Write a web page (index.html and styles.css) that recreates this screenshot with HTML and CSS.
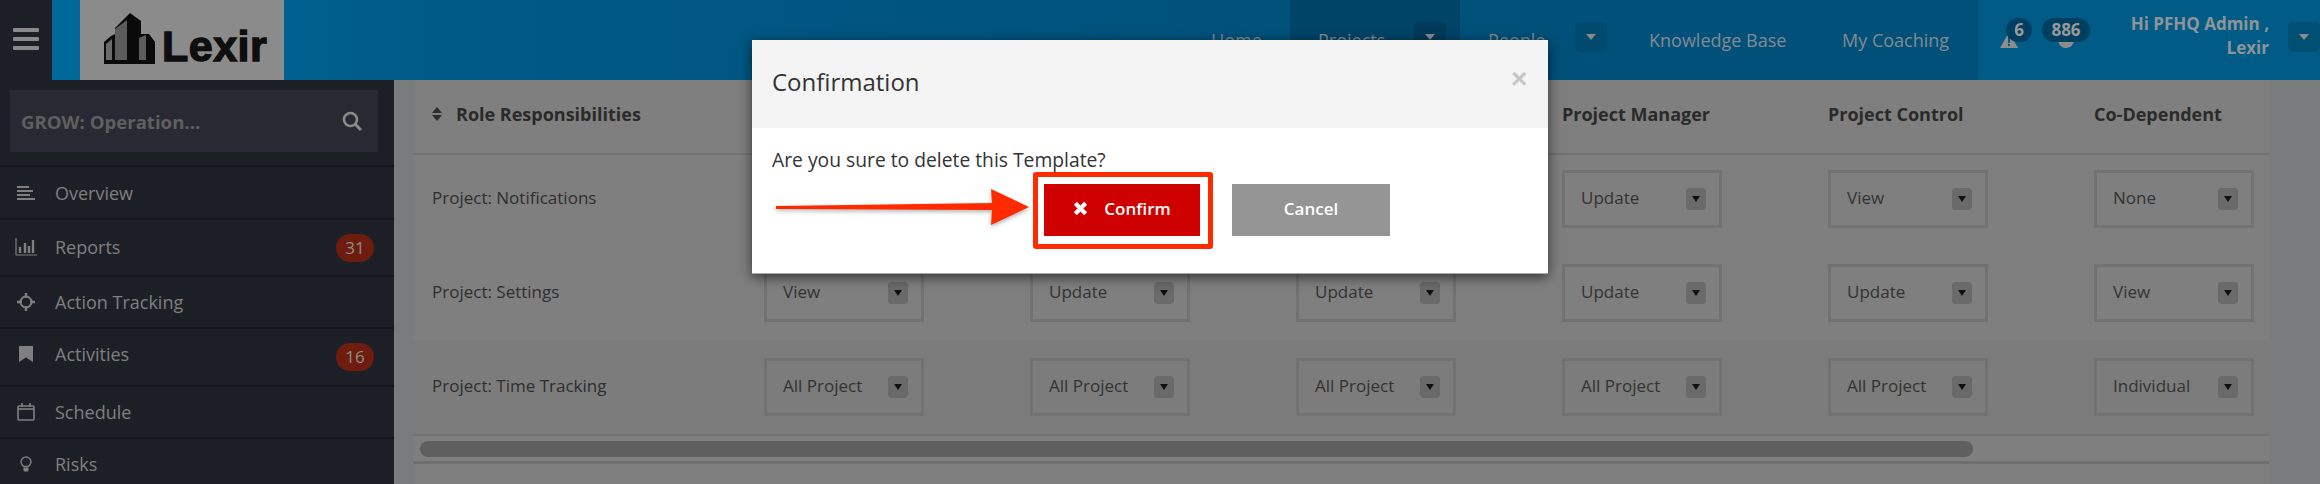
FILE: index.html
```html
<!DOCTYPE html>
<html lang="en">
<head>
<meta charset="utf-8">
<title>Confirmation</title>
<link rel="stylesheet" href="styles.css">
</head>
<body>
<div class="page">
  <header class="topbar">
    <div class="burger"><span></span><span></span><span></span></div>
    <div class="brandbar">
      <div class="logo">
        <svg class="logo-mark" viewBox="0 0 54 52" width="54" height="52">
          <path d="M8 24 L12 22 V16 L27 1 L38 9 V22 L46 22 L52 30 V52 H1 V30 Z" fill="#0a0a0a"/>
          <path d="M12 17 L24 8 V48 H12 Z" fill="#5c5c5c"/>
          <path d="M3 32 L9 27 V48 H3 Z" fill="#6a6a6a"/>
          <path d="M36 26 L43 23 V48 H36 Z" fill="#5c5c5c"/>
        </svg>
        <span class="logo-text">Lexir</span>
      </div>
      <nav class="nav">
        <span class="nav-item nav-home">Home</span>
        <span class="nav-item nav-active">Projects<b class="caret-btn caret-active"><i class="caret"></i></b></span>
        <span class="nav-item nav-people">People<b class="caret-btn"><i class="caret"></i></b></span>
        <span class="nav-item nav-kb">Knowledge Base</span>
        <span class="nav-item nav-coach">My Coaching</span>
      </nav>
    </div>
    <div class="userbar">
      <div class="alerts">
        <svg class="alert-icon" viewBox="0 0 18 16" width="18" height="16"><path d="M9 0 L18 16 H0 Z" fill="#8d8d8d"/><rect x="8" y="5" width="2" height="6" fill="#005a85"/><rect x="8" y="12" width="2" height="2" fill="#005a85"/></svg>
        <span class="pill pill-six">6</span>
        <svg class="globe-icon" viewBox="0 0 16 16" width="16" height="16"><circle cx="8" cy="8" r="8" fill="#8d8d8d"/></svg>
        <span class="pill pill-many">886</span>
      </div>
      <div class="hello">Hi PFHQ Admin ,<br>Lexir</div>
      <b class="caret-btn caret-user"><i class="caret"></i></b>
    </div>
  </header>

  <div class="below">
    <aside class="sidebar">
      <div class="search-wrap">
        <div class="search">
          <span>GROW: Operation...</span>
          <svg viewBox="0 0 20 20" width="20" height="20"><circle cx="8.5" cy="8.5" r="6.5" fill="none" stroke="#8a8a8a" stroke-width="2.6"/><path d="M13.5 13.5 L19 19" stroke="#8a8a8a" stroke-width="3"/></svg>
        </div>
      </div>
      <ul class="menu">
        <li class="row-overview">
          <svg viewBox="0 0 20 16" width="20" height="16"><path d="M1 2H13M1 6H17M1 10H14M1 14H19" stroke="#7f7f7f" stroke-width="2.2"/></svg>
          <span>Overview</span>
        </li>
        <li class="row-reports">
          <svg viewBox="0 0 22 18" width="22" height="18"><path d="M1 0V17H22" fill="none" stroke="#7f7f7f" stroke-width="1.2"/><path d="M5 9V15M10 5V15M14 8V15M18 2V15" stroke="#7f7f7f" stroke-width="2.4"/></svg>
          <span>Reports</span><em class="count">31</em>
        </li>
        <li class="row-action">
          <svg viewBox="0 0 18 18" width="18" height="18"><circle cx="9" cy="9" r="5.5" fill="none" stroke="#7f7f7f" stroke-width="2"/><path d="M9 0V5M9 13V18M0 9H5M13 9H18" stroke="#7f7f7f" stroke-width="2.4"/></svg>
          <span>Action Tracking</span>
        </li>
        <li class="row-activities">
          <svg viewBox="0 0 14 16" width="14" height="16"><path d="M0 0H14V16L7 11.5L0 16Z" fill="#7f7f7f"/></svg>
          <span>Activities</span><em class="count">16</em>
        </li>
        <li class="row-schedule">
          <svg viewBox="0 0 18 18" width="18" height="18"><rect x="1" y="3" width="16" height="14" rx="1" fill="none" stroke="#7f7f7f" stroke-width="1.6"/><path d="M1 6H17" stroke="#7f7f7f" stroke-width="1.6"/><path d="M5 0V4M13 0V4" stroke="#7f7f7f" stroke-width="1.6"/></svg>
          <span>Schedule</span>
        </li>
        <li class="row-risks">
          <svg viewBox="0 0 12 16" width="12" height="16"><path d="M3.5 10.5C2 9 1 8 1 6A5 5 0 0 1 11 6C11 8 10 9 8.500 10.500Z" fill="none" stroke="#7f7f7f" stroke-width="1.4"/><rect x="3.500" y="11.500" width="5" height="4" rx="1" fill="#7f7f7f"/></svg>
          <span>Risks</span>
        </li>
      </ul>
    </aside>

    <main class="main">
      <div class="table">
        <div class="grid thead">
          <div class="th th-role">
            <svg viewBox="0 0 10 14" width="10" height="14"><path d="M5 0L10 6H0ZM5 14L0 8H10Z" fill="#2c2c2c"/></svg>
            Role Responsibilities
          </div>
          <div class="th"></div><div class="th"></div><div class="th"></div>
          <div class="th">Project Manager</div>
          <div class="th">Project Control</div>
          <div class="th">Co-Dependent</div>
        </div>
        <div class="grid trow trow-first">
          <div class="role">Project: Notifications</div>
          <div class="sel"><span></span><b><i></i></b></div>
          <div class="sel"><span></span><b><i></i></b></div>
          <div class="sel"><span></span><b><i></i></b></div>
          <div class="sel"><span>Update</span><b><i></i></b></div>
          <div class="sel"><span>View</span><b><i></i></b></div>
          <div class="sel"><span>None</span><b><i></i></b></div>
        </div>
        <div class="grid trow trow-mid">
          <div class="role">Project: Settings</div>
          <div class="sel"><span>View</span><b><i></i></b></div>
          <div class="sel"><span>Update</span><b><i></i></b></div>
          <div class="sel"><span>Update</span><b><i></i></b></div>
          <div class="sel"><span>Update</span><b><i></i></b></div>
          <div class="sel"><span>Update</span><b><i></i></b></div>
          <div class="sel"><span>View</span><b><i></i></b></div>
        </div>
        <div class="grid trow trow-last">
          <div class="role">Project: Time Tracking</div>
          <div class="sel"><span>All Project</span><b><i></i></b></div>
          <div class="sel"><span>All Project</span><b><i></i></b></div>
          <div class="sel"><span>All Project</span><b><i></i></b></div>
          <div class="sel"><span>All Project</span><b><i></i></b></div>
          <div class="sel"><span>All Project</span><b><i></i></b></div>
          <div class="sel"><span>Individual</span><b><i></i></b></div>
        </div>
        <div class="scroll"><div class="thumb"></div></div>
      </div>
    </main>
  </div>

  <section class="modal">
    <div class="modal-head">
      <h2>Confirmation</h2>
      <span class="close">×</span>
    </div>
    <div class="modal-body">
      <p>Are you sure to delete this Template?</p>
      <div class="actions">
        <button class="btn btn-confirm">
          <svg viewBox="0 0 16 16" width="15" height="15"><path d="M2.500 2.500L13.500 13.500M13.500 2.500L2.500 13.500" stroke="#fff" stroke-width="4.500"/></svg>
          Confirm
        </button>
        <button class="btn btn-cancel">Cancel</button>
      </div>
    </div>
  </section>

  <div class="mark-box"></div>
  <svg class="mark-arrow" viewBox="0 0 256 40" width="256" height="40">
    <path d="M0 17 L216 14 L215 0 L253 18 L215 36 L216 21 L0 20 Z" fill="#ff2a00"/>
  </svg>
</div>
</body>
</html>
```
FILE: styles.css
```css
* { box-sizing: border-box; }
html, body { margin: 0; padding: 0; }
body { background: #7a7b7d; font-family: "Open Sans", "Noto Sans", sans-serif; }
.page { position: relative; width: 2320px; height: 484px; overflow: hidden; }

/* top bar */
.topbar { display: flex; height: 80px; }
.burger { flex: none; width: 52px; background: #1d1f26; display: flex; flex-direction: column; gap: 5px; align-items: center; justify-content: center; padding-bottom: 3px; }
.burger span { width: 26px; height: 4px; background: #8a8a8a; border-radius: 1px; }
.brandbar { flex: 0 0 1926px; display: flex; background: linear-gradient(90deg, #00699b 0, #005a87 20%, #00517b 65%, #00507a 100%); padding-left: 28px; }
.logo { flex: none; width: 204px; background: #8b8b8b; display: flex; align-items: flex-end; padding: 0 0 16px 23px; }
.logo-mark { flex: none; }
.logo-text { font-family: "Liberation Sans", sans-serif; font-weight: 700; font-size: 43px; line-height: 36px; color: #0e0e0e; margin-left: 5px; -webkit-text-stroke: 1.4px #0e0e0e; letter-spacing: 0.5px; }
.nav { display: flex; color: #848a8e; font-size: 18px; }
.nav-item { display: flex; align-items: center; height: 80px; white-space: nowrap; }
.nav-home { margin-left: 927px; width: 79px; }
.nav-active { background: #004468; width: 170px; padding-left: 28px; position: relative; }
.nav-people { margin-left: 28px; width: 161px; position: relative; }
.nav-kb { width: 193px; }
.nav-coach { width: auto; }
.caret-btn { position: absolute; display: flex; align-items: center; justify-content: center; width: 32px; height: 30px; top: 22px; border-radius: 5px; background: #004a70; }
.nav-active .caret-btn { left: 124px; background: #003a5a; }
.nav-people .caret-btn { left: 87px; }
.caret { width: 0; height: 0; border-left: 5px solid transparent; border-right: 5px solid transparent; border-top: 6px solid #8a8a8a; }
.userbar { flex: 1; background: #005c87; position: relative; display: flex; }
.alerts { position: relative; width: 130px; }
.alert-icon { position: absolute; left: 22px; top: 32px; }
.globe-icon { position: absolute; left: 80px; top: 32px; }
.pill { position: absolute; top: 18px; height: 24px; border-radius: 12px; background: #003f60; color: #999; font-weight: 700; font-size: 17px; line-height: 24px; text-align: center; }
.pill-six { left: 28px; width: 26px; }
.pill-many { left: 64px; width: 48px; }
.hello { width: 161px; padding-top: 12px; text-align: right; color: #8f9498; font-weight: 700; font-size: 17px; line-height: 24px; white-space: nowrap; }
.caret-user { right: 0; background: #004f75; }

/* sidebar */
.below { display: flex; height: 404px; }
.sidebar { flex: none; width: 394px; background: #1d1f26; }
.search-wrap { height: 87px; padding: 10px 16px 0 10px; border-bottom: 2px solid #15171c; }
.search { height: 62px; background: #282932; display: flex; align-items: center; justify-content: space-between; padding: 0 16px 0 11px; color: #5f5f5f; font-weight: 700; font-size: 18.6px; }
.menu { list-style: none; margin: 0; padding: 0; color: #7f7f7f; font-size: 18px; }
.menu li { position: relative; display: flex; align-items: center; border-bottom: 2px solid #15171c; padding-left: 15px; }
.menu li svg { flex: 0 0 auto; width: 22px; }
.menu li span { margin-left: 18px; }
.row-overview { height: 53px; }
.row-reports { height: 57px; padding-bottom: 2px; }
.row-action { height: 52px; }
.row-activities { height: 58px; padding-bottom: 6px; }
.row-schedule { height: 52px; }
.row-risks { height: 50px; border-bottom: 0 !important; }
.count { position: absolute; right: 20px; top: 14px; width: 38px; height: 28px; border-radius: 14px; background: #6d1c0e; color: #8c8c8c; font-style: normal; font-size: 17px; line-height: 28px; text-align: center; }

/* table */
.main { flex: 1; padding-left: 19px; }
.table { width: 1856px; height: 404px; background: #7f7f7f; }
.grid { display: grid; grid-template-columns: 351px repeat(5, 266px) 175px; }
.thead { height: 75px; padding-bottom: 6px; border-bottom: 2px solid #727272; align-items: center; color: #2a2a2a; font-weight: 700; font-size: 18px; }
.th { white-space: nowrap; }
.th-role { padding-left: 19px; display: flex; align-items: center; gap: 14px; }
.trow { height: 94px; padding-top: 18px; }
.trow-first { height: 91px; padding-top: 15px; }
.trow-last { background: #7c7c7c; }
.role { padding: 16px 0 0 19px; color: #2e2e2e; font-size: 17px; line-height: 24px; }
.sel { width: 160px; height: 58px; border: 3px solid #727272; display: flex; align-items: center; justify-content: space-between; padding: 0 13px 4px 16px; color: #333; font-size: 17px; white-space: nowrap; }
.sel b { width: 20px; height: 22px; margin-top: 4px; border-radius: 4px; background: #6a6a6a; display: flex; align-items: center; justify-content: center; }
.sel b i { width: 0; height: 0; border-left: 4px solid transparent; border-right: 4px solid transparent; border-top: 6px solid #111; }
.scroll { height: 30px; border-top: 2px solid #737373; border-bottom: 3px solid #6f6f6f; padding: 5px 0 0 7px; }
.thumb { width: 1553px; height: 16px; border-radius: 8px; background: #5f5f5f; }

/* modal */
.modal { position: absolute; left: 752px; top: 40px; width: 796px; height: 234px; background: #fff; box-shadow: 0 3px 12px rgba(0, 0, 0, 0.6); border-bottom: 1px solid #aaa; }
.modal-head { height: 88px; background: #f4f4f4; position: relative; padding: 24px 0 0 20px; }
.modal-head h2 { margin: 0; font-weight: 400; font-size: 24px; line-height: 36px; color: #333; }
.close { position: absolute; left: 759px; top: 23px; font-family: "Liberation Sans", sans-serif; font-weight: 700; font-size: 28px; line-height: 32px; color: #c6c6c6; }
.modal-body { padding: 20px 0 0 20px; }
.modal-body p { margin: 0; font-size: 19.3px; line-height: 24px; color: #333; }
.actions { display: flex; gap: 32px; margin: 12px 0 0 272px; }
.btn { height: 52px; width: 158px; border: 0; color: #fff; font-family: inherit; font-weight: 600; font-size: 17px; display: flex; align-items: center; justify-content: center; gap: 16px; padding: 0 0 3px; }
.btn-confirm { width: 156px; background: #cf0000; }
.btn-cancel { background: #959595; }

/* annotation */
.mark-box { position: absolute; left: 1033px; top: 172px; width: 180px; height: 77px; border: 5px solid #ff2a00; border-radius: 3px; }
.mark-arrow { position: absolute; left: 776px; top: 189px; filter: drop-shadow(0 2px 2px rgba(0,0,0,0.3)); }
```
